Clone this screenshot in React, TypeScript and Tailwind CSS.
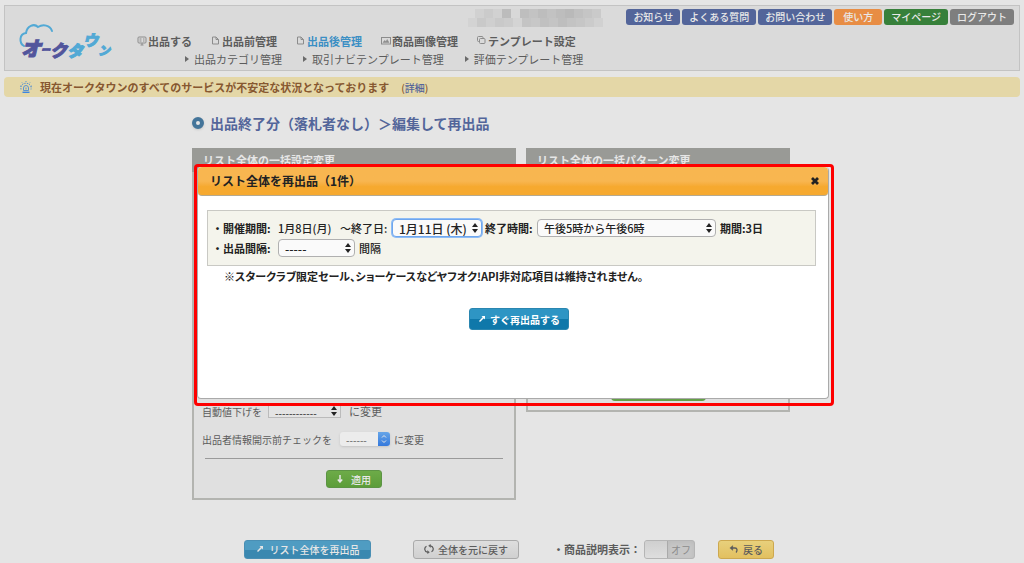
import { useState } from 'react';
import type { ReactNode } from 'react';

const helpLinks = [
  { label: 'お知らせ', color: 'bg-[#53659a]' },
  { label: 'よくある質問', color: 'bg-[#53659a]' },
  { label: 'お問い合わせ', color: 'bg-[#53659a]' },
  { label: '使い方', color: 'bg-[#e88d44]' },
  { label: 'マイページ', color: 'bg-[#37803a]' },
  { label: 'ログアウト', color: 'bg-[#7e7e7e]' },
];

const mainNav = [
  { label: '出品する', icon: 'board' },
  { label: '出品前管理', icon: 'page' },
  { label: '出品後管理', icon: 'page', active: true },
  { label: '商品画像管理', icon: 'image' },
  { label: 'テンプレート設定', icon: 'copy' },
];

const subNav = ['出品カテゴリ管理', '取引ナビテンプレート管理', '評価テンプレート管理'];

function NavIcon({ name }: { name: string }) {
  return (
    <svg viewBox="0 0 10 10" className="h-2.5 w-2.5 shrink-0" fill="none" stroke="#8c8c8c" aria-hidden="true">
      {name === 'board' && (
        <>
          <rect x="1" y="1" width="8" height="6" rx="1" />
          <path d="M2.5 3h2M2.5 5h2M6 3h1.5M6 5h1.5M5 7v2M3.5 9h3" />
        </>
      )}
      {name === 'page' && <path d="M1.500 1h3.5L7.500 3.500V8H1.500zM5 1v2.500H7.500" />}
      {name === 'image' && (
        <>
          <rect x="0.5" y="1.500" width="9" height="6.500" />
          <path d="M2 6.500l1.500-2 1.500 1 1.200-2L8 6.500z" fill="#8c8c8c" strokeWidth="0.5" />
        </>
      )}
      {name === 'copy' && (
        <>
          <path d="M2.500 5.500H1.500a1 1 0 0 1-1-1v-3a1 1 0 0 1 1-1h3.500a1 1 0 0 1 1 1V2.500" />
          <rect x="2.500" y="2.500" width="5.500" height="5" rx="1" />
        </>
      )}
    </svg>
  );
}

function Logo() {
  return (
    <svg viewBox="0 0 94 42" className="h-[42px] w-[94px] overflow-visible" role="img" aria-label="オークタウン">
      <path
        d="M4 23C-1 20-1 11 6 10C7 3 14 0 18 4C23 1 30 2 32 8"
        fill="none" stroke="#52a9d5" strokeWidth="2" strokeLinecap="round"
      />
      <text y="33" strokeWidth="1" className="font-['Noto_Sans_CJK_JP',sans-serif] font-black italic">
        <tspan x="1" fontSize="20" fill="#52559c" stroke="#52559c">オ</tspan>
        <tspan fontSize="9" dy="-3" fill="#52559c" stroke="#52559c">ー</tspan>
        <tspan fontSize="17" dy="4" fill="#52559c" stroke="#52559c">ク</tspan>
        <tspan fontSize="16" fill="#52a9d5" stroke="#52a9d5">タ</tspan>
        <tspan fontSize="15" dy="-11" fill="#52a9d5" stroke="#52a9d5">ウ</tspan>
        <tspan fontSize="12" dy="9" fill="#52a9d5" stroke="#52a9d5">ン</tspan>
      </text>
    </svg>
  );
}

// account name, masked out as blocks
function MaskedName() {
  const top = ['#d1d1d1', '#cbcbcb', '#d1d1d1', '#bcbcbc', '#d8d8d8', '#bebebe', '#c3c3c3', '#bdbdbd', '#c2c2c2', '#bdbdbd', '#b9b9b9', '#c0c0c0', '#c5c5c5', '#cacaca'];
  const bottom = ['#d3d3d3', '#c9c9c9', '#cfcfcf', '#c9c9c9', '#cccccc', '#d4d4d4', '#c4c4c4', '#c7c7c7', '#c0c0c0', '#c4c4c4', '#bebebe', '#c3c3c3', '#c6c6c6', '#cbcbcb', '#d1d1d1'];
  return (
    <svg viewBox="0 0 136 18" className="mr-[22px] h-[18px] w-[136px]" aria-hidden="true">
      {top.map((c, i) => <rect key={i} x={7 + i * 9} y="0" width="9" height="9" fill={c} />)}
      {bottom.map((c, i) => <rect key={i} x={i * 9} y="9" width="9" height="9" fill={c} />)}
    </svg>
  );
}

function UpDown() {
  return (
    <svg viewBox="0 0 6 10" className="pointer-events-none absolute top-1/2 right-1 h-2.5 w-1.5 -translate-y-1/2" aria-hidden="true">
      <path d="M3 0L6 4H0zM3 10L0 6h6z" fill="currentColor" />
    </svg>
  );
}

function Picker({ id, options, className }: { id: string; options: string[]; className: string }) {
  return (
    <span className="relative inline-flex text-[#222]">
      <select id={id} className={`appearance-none border outline-none ${className}`}>
        {options.map(o => <option key={o}>{o}</option>)}
      </select>
      <UpDown />
    </span>
  );
}

function ArrowUpRight() {
  return (
    <svg viewBox="0 0 8 8" className="h-2 w-2" aria-hidden="true">
      <path d="M3.500 1H7v3.500L5.800 3.300 2 7 1 6 4.700 2.200z" fill="currentColor" />
    </svg>
  );
}

function SettingPanel({ title, className, children }: { title: string; className: string; children: ReactNode }) {
  return (
    <section className={`flex flex-col border-2 border-[#b3b4b0] bg-[#e0e0e0] ${className}`}>
      <h2 className="-mx-0.5 -mt-0.5 bg-[#999a96] py-1 pl-[11px] text-[11px] leading-4 font-bold text-[#e6e6e6]">{title}</h2>
      <div className="flex grow flex-col justify-end">{children}</div>
    </section>
  );
}

function RelistDialog({ onClose }: { onClose: () => void }) {
  return (
    <div className="absolute top-[164px] left-[194px] w-[640px] rounded-sm border-[3px] border-[#fe0000] pr-0.5 pb-1">
      <div role="dialog" aria-labelledby="dialog-title" className="flex h-[232px] flex-col rounded border border-t-0 border-[#aaa] bg-white text-[#222]">
        <div className="flex h-[29px] items-center justify-between rounded border-b border-[#b5a98f] bg-linear-to-b from-[#f8b650] from-50% to-[#f6a92f] to-70% pr-2 pl-3">
          <h2 id="dialog-title" className="text-[12px] font-bold">リスト全体を再出品（1件）</h2>
          <button type="button" onClick={onClose} aria-label="閉じる">
            <svg viewBox="0 0 10 10" className="h-2.5 w-2.5" aria-hidden="true">
              <path d="M2 2l6 6M8 2l-6 6" stroke="#222" strokeWidth="2.800" />
            </svg>
          </button>
        </div>
        <form className="flex flex-col text-[11px] font-medium" onSubmit={e => e.preventDefault()}>
          <div className="mt-3.5 mr-3 ml-[9px] border border-[#c9c9c4] bg-[#f4f4ec] py-[7px] pl-1">
            <div className="flex h-5 items-center">
              <span className="w-[66px] font-bold">・開催期間:</span>
              <span className="w-[62px]">1月8日(月)</span>
              <label htmlFor="end-day" className="w-[52px]">〜終了日:</label>
              <Picker id="end-day" options={['1月11日 (木)']}
                className="h-[18px] w-[90px] rounded border-[#6ea6ee] bg-[#fafafa] pl-1.5 text-[12px] ring-1 ring-[#8ebcf5]" />
              <label htmlFor="end-time" className="w-[55px] pl-[3px] font-bold">終了時間:</label>
              <Picker id="end-time" options={['午後5時から午後6時']}
                className="h-[18px] w-[179px] rounded border-[#b0b0b0] bg-[#fafafa] pl-1.5 text-[11px]" />
              <span className="pl-1 font-bold">期間:3日</span>
            </div>
            <div className="flex h-5 items-center">
              <label htmlFor="interval" className="w-[66px] font-bold">・出品間隔:</label>
              <Picker id="interval" options={['-----']}
                className="h-[18px] w-[77px] rounded border-[#b0b0b0] bg-[#fafafa] pl-1.5 text-[12px]" />
              <span className="pl-1">間隔</span>
            </div>
          </div>
          <p className="mt-0.5 pl-[26px] leading-4 font-bold [font-feature-settings:'palt']">
            ※スタークラブ限定セール、ショーケースなどヤフオク!API非対応項目は維持されません。
          </p>
          <div className="mt-6 flex justify-center pl-3">
            <button type="submit" className="flex h-[22px] items-center gap-1 rounded-[3px] border border-[#2a86b0] bg-linear-to-b from-[#2e95c4] from-50% to-[#0f78aa] to-50% px-2 text-[10px] font-bold text-white">
              <ArrowUpRight />
              すぐ再出品する
            </button>
          </div>
        </form>
      </div>
    </div>
  );
}

export default function App() {
  const [open, setOpen] = useState(true);
  const [showDescription, setShowDescription] = useState(false);

  return (
    <div className="relative min-h-screen bg-[#e5e5e5] px-1 pt-[5px] font-['Noto_Sans_CJK_JP',sans-serif] text-[11px] text-[#5c5c5c]">
      <header className="flex h-[66px] border border-[#c3c3c3] bg-[#dadada]">
        <a href="#" className="mt-[17px] ml-[15px] self-start"><Logo /></a>
        <div className="ml-[23px] grow">
          <div className="flex h-[26px] items-start justify-end pt-[3px] pr-[5px]">
            <MaskedName />
            <div className="flex gap-0.5">
              {helpLinks.map(l => (
                <a key={l.label} href="#" className={`min-w-12 rounded-[3px] px-[7px] text-center text-[10px] leading-4 font-medium text-[#e8e8e8] ${l.color}`}>
                  {l.label}
                </a>
              ))}
            </div>
          </div>
          <nav>
            <ul className="flex gap-[19px] font-bold">
              {mainNav.map(n => (
                <li key={n.label}>
                  <a href="#" className={`flex items-center gap-px leading-[18px] ${n.active ? 'text-[#3b8fc4]' : ''}`}>
                    <NavIcon name={n.icon} />
                    {n.label}
                  </a>
                </li>
              ))}
            </ul>
            <ul className="ml-12 flex gap-[21px]">
              {subNav.map(label => (
                <li key={label}>
                  <a href="#" className="flex items-center gap-[5px] leading-[18px]">
                    <svg viewBox="0 0 4 6" className="h-1.5 w-1" aria-hidden="true"><path d="M0 0l4 3-4 3z" fill="#6a6a6a" /></svg>
                    {label}
                  </a>
                </li>
              ))}
            </ul>
          </nav>
        </div>
      </header>

      <div className="mt-1.5 flex h-5 items-center rounded bg-[#e4d7a7] pl-4 font-bold text-[#875830]">
        <svg viewBox="0 0 12 12" className="mr-2 h-3 w-3" fill="none" stroke="#5b93d0" aria-hidden="true">
          <path d="M2.500 11.300h7" stroke="#3d86e0" strokeWidth="1.400" />
          <path d="M3.500 9.500V7a2.500 2.500 0 0 1 5 0v2.500zM6 6.500v2" />
          <path d="M1 8.500C.3 4.500 3 2.200 6 2.200S11.700 4.500 11 8.500" strokeDasharray="1.500 1" />
          <path d="M6 0v1M2 1.500l.7.8M10 1.500l-.7.8M0 5l1 .3M12 5l-1 .3" />
        </svg>
        現在オークタウンのすべてのサービスが不安定な状況となっております
        <span className="pl-3 text-[10px] font-medium">(<a href="#" className="text-[#53659a]">詳細</a>)</span>
      </div>

      <main className="ml-[188px] max-w-[598px]">
        <h1 className="mt-[15px] mb-3.5 flex items-center gap-1.5 text-[14px] leading-[22px] font-bold text-[#53659a]">
          <span className="h-3 w-3 rounded-full border-4 border-[#44759a] bg-[#e5e5e5] shadow" />
          出品終了分（落札者なし）＞編集して再出品
        </h1>

        <div className="flex items-start gap-2.5">
          <SettingPanel title="リスト全体の一括設定変更" className="min-h-[352px] w-[324px]">
            <div className="flex flex-col px-2 pb-2.5 text-[10px]">
              <div className="flex h-4 items-center">
                <label htmlFor="auto-discount" className="mr-1.5">自動値下げを</label>
                <Picker id="auto-discount" options={['------------']}
                  className="h-3.5 w-[73px] border-[#bbb] bg-[#e4e4e4] pl-1.5 text-[10px]" />
                <span className="ml-2 text-[11px]">に変更</span>
              </div>
              <div className="mt-3 flex h-4 items-center">
                <label htmlFor="disclosure" className="mr-2">出品者情報開示前チェックを</label>
                <span className="relative inline-flex">
                  <select id="disclosure" className="h-3.5 w-[50px] appearance-none rounded-[3px] bg-[#ececec] pl-1.5 text-[10px] shadow-sm">
                    <option>------</option>
                  </select>
                  <span className="pointer-events-none absolute inset-y-0 right-0 w-3 rounded-r-[3px] bg-linear-to-b from-[#66a5e8] to-[#3579dc]">
                    <svg viewBox="0 0 12 14" className="h-3.5 w-3" fill="none" stroke="#e8e8e8" aria-hidden="true">
                      <path d="M4 5.500l2-2 2 2M4 8.500l2 2 2-2" />
                    </svg>
                  </span>
                </span>
                <span className="ml-1">に変更</span>
              </div>
              <hr className="mx-[3px] mt-[11px] border-[#9a9a9a]" />
              <button type="button" className="mt-[11px] flex h-[18px] items-center gap-2 self-center rounded-[3px] border border-[#5c9444] bg-linear-to-b from-[#6dab48] to-[#5c9d39] px-2.5 font-medium text-[#e8e8e8]">
                <svg viewBox="0 0 6 8" className="h-2 w-1.5" fill="none" stroke="currentColor" strokeWidth="1.500" aria-hidden="true">
                  <path d="M3 0v6M.8 4.500L3 7l2.200-2.500" />
                </svg>
                適用
              </button>
            </div>
          </SettingPanel>
          <SettingPanel title="リスト全体の一括パターン変更" className="min-h-[264px] w-[264px]">
            <button type="button" aria-label="変更" className="mb-[9px] h-5 w-[95px] self-center rounded bg-[#659f47]" />
          </SettingPanel>
        </div>

        <div className="mt-[39px] ml-[52px] flex h-5 items-center text-[10px]">
          <button type="button" onClick={() => setOpen(true)}
            className="flex h-[19px] w-[127px] items-center justify-center gap-1.5 rounded-[3px] border border-[#4a8fb4] bg-linear-to-b from-[#4f9cc2] from-50% to-[#3a88b0] to-50% font-medium text-[#e6e6e6]">
            <ArrowUpRight />
            リスト全体を再出品
          </button>
          <button type="button" className="ml-[42px] flex h-[19px] w-[106px] items-center justify-center gap-1 rounded-[3px] border border-[#aaa] bg-linear-to-b from-[#dedede] to-[#d0d0d0] font-medium">
            <svg viewBox="0 0 10 10" className="h-2.5 w-2.5" fill="none" stroke="currentColor" strokeWidth="1.200" aria-hidden="true">
              <path d="M4 8.200H3.500a3.200 3.200 0 0 1-1-6M6 1.800h.5a3.200 3.200 0 0 1 1 6" />
              <path d="M3.500 6.500l2 1.700-2 1.600zM6.500 .2l-2 1.600 2 1.700z" fill="currentColor" strokeWidth="0.3" />
            </svg>
            全体を元に戻す
          </button>
          <label htmlFor="description" className="ml-[34px] text-[11px] font-bold">・商品説明表示：</label>
          <span className="relative ml-[3px] flex h-[19px] w-[51px] overflow-hidden rounded-[3px] border border-[#b5b5b5] bg-[#c6c6c6]">
            <input id="description" type="checkbox" checked={showDescription}
              onChange={e => setShowDescription(e.target.checked)}
              className="h-full w-[23px] appearance-none border-r border-[#aaa] bg-linear-to-b from-[#cfcfcf] to-[#dedede]" />
            <span className="grow text-center leading-[17px] text-[#8c8c8c] inset-shadow-sm">{showDescription ? 'オン' : 'オフ'}</span>
          </span>
          <button type="button" className="ml-[23px] flex h-[19px] items-center gap-1 rounded-[3px] border border-[#cda84f] bg-linear-to-b from-[#e8d07c] to-[#e2c060] px-2.5 font-medium">
            <svg viewBox="0 0 10 8" className="h-2 w-2.5" fill="none" stroke="currentColor" strokeWidth="1.300" aria-hidden="true">
              <path d="M2 3h4c2.500 0 2.500 3 1 4.500" />
              <path d="M3.800 .5v5L.8 3z" fill="currentColor" strokeWidth="0.3" />
            </svg>
            戻る
          </button>
        </div>
      </main>

      {open && <RelistDialog onClose={() => setOpen(false)} />}
    </div>
  );
}
